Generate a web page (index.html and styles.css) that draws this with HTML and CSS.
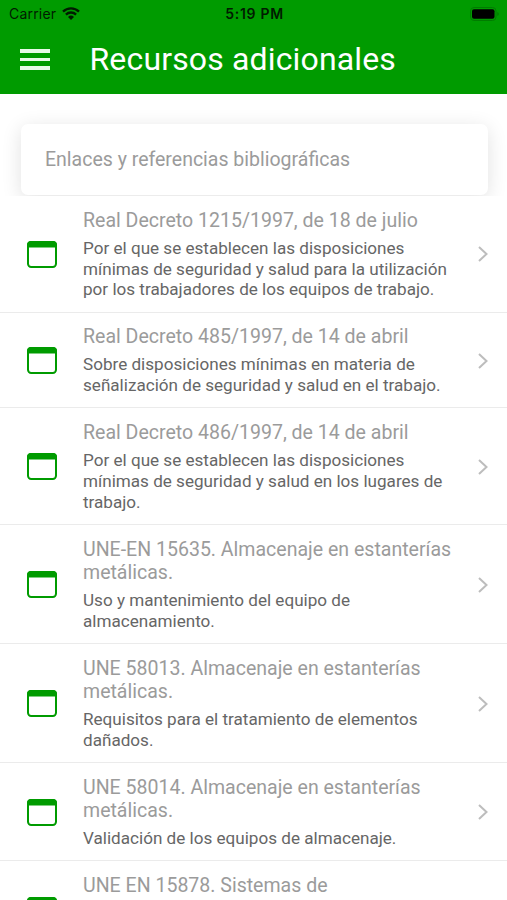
FILE: index.html
```html
<!DOCTYPE html>
<html lang="es">
<head>
    <meta charset="UTF-8">
    <meta name="viewport" content="width=device-width, initial-scale=1.0">
    <title>Recursos adicionales</title>
    <link rel="stylesheet" href="styles.css">
</head>
<body>
    <svg class="sprite" width="0" height="0">
        <symbol id="web" viewBox="0 0 30 27">
            <rect x="1" y="1" width="28" height="25" rx="3.2" fill="none" stroke="#009b00" stroke-width="2"/>
            <path d="M0 6.5V4a4 4 0 0 1 4-4h22a4 4 0 0 1 4 4v2.5z" fill="#009b00"/>
        </symbol>
        <symbol id="chevron" viewBox="0 0 10 16">
            <path d="M1 1l7.5 7L1 15" fill="none" stroke="#bdbdbd" stroke-width="2"/>
        </symbol>
    </svg>

    <header class="header">
        <div class="status">
            <div class="status-left">
                <span class="carrier">Carrier</span>
                <svg class="wifi" width="18" height="13" viewBox="0 0 18 13">
                    <path d="M1 4.6a11.4 11.4 0 0 1 16 0M3.9 7.6a7.3 7.3 0 0 1 10.2 0" fill="none" stroke="#001c00" stroke-width="2.3"/>
                    <path d="M9 13L6 10a4.3 4.3 0 0 1 6 0z" fill="#001c00"/>
                </svg>
            </div>
            <span class="time">5:19 PM</span>
            <div class="status-right">
                <svg width="30" height="14" viewBox="0 0 30 14">
                    <rect x=".5" y=".5" width="25.5" height="13" rx="3.5" fill="none" stroke="#007c00"/>
                    <rect x="2" y="2.3" width="22.5" height="9.4" rx="2" fill="#000"/>
                    <path d="M27.3 5v4q1.5-.6 1.5-2t-1.5-2z" fill="#007c00"/>
                </svg>
            </div>
        </div>
        <div class="toolbar">
            <div class="menu">
                <span class="bar"></span>
                <span class="bar"></span>
                <span class="bar"></span>
            </div>
            <h1 class="title">Recursos adicionales</h1>
        </div>
    </header>

    <div class="card-wrap">
        <div class="card">Enlaces y referencias bibliográficas</div>
    </div>

    <div class="list">
        <div class="item">
            <svg class="icon"><use href="#web"/></svg>
            <div class="content">
                <h2>Real Decreto 1215/1997, de 18 de julio</h2>
                <p>Por el que se establecen las disposiciones<br>mínimas de seguridad y salud para la utilización<br>por los trabajadores de los equipos de trabajo.</p>
            </div>
            <svg class="chevron"><use href="#chevron"/></svg>
        </div>
        <div class="item">
            <svg class="icon"><use href="#web"/></svg>
            <div class="content">
                <h2>Real Decreto 485/1997, de 14 de abril</h2>
                <p>Sobre disposiciones mínimas en materia de<br>señalización de seguridad y salud en el trabajo.</p>
            </div>
            <svg class="chevron"><use href="#chevron"/></svg>
        </div>
        <div class="item">
            <svg class="icon"><use href="#web"/></svg>
            <div class="content">
                <h2>Real Decreto 486/1997, de 14 de abril</h2>
                <p>Por el que se establecen las disposiciones<br>mínimas de seguridad y salud en los lugares de<br>trabajo.</p>
            </div>
            <svg class="chevron"><use href="#chevron"/></svg>
        </div>
        <div class="item">
            <svg class="icon"><use href="#web"/></svg>
            <div class="content">
                <h2>UNE-EN 15635. Almacenaje en estanterías<br>metálicas.</h2>
                <p>Uso y mantenimiento del equipo de<br>almacenamiento.</p>
            </div>
            <svg class="chevron"><use href="#chevron"/></svg>
        </div>
        <div class="item">
            <svg class="icon"><use href="#web"/></svg>
            <div class="content">
                <h2>UNE 58013. Almacenaje en estanterías<br>metálicas.</h2>
                <p>Requisitos para el tratamiento de elementos<br>dañados.</p>
            </div>
            <svg class="chevron"><use href="#chevron"/></svg>
        </div>
        <div class="item">
            <svg class="icon"><use href="#web"/></svg>
            <div class="content">
                <h2>UNE 58014. Almacenaje en estanterías<br>metálicas.</h2>
                <p>Validación de los equipos de almacenaje.</p>
            </div>
            <svg class="chevron"><use href="#chevron"/></svg>
        </div>
        <div class="item last">
            <svg class="icon"><use href="#web"/></svg>
            <div class="content">
                <h2>UNE EN 15878. Sistemas de</h2>
            </div>
        </div>
    </div>
</body>
</html>
```

FILE: styles.css
```css
* {
    box-sizing: border-box;
}

body {
    margin: 0;
    height: 900px;
    overflow: hidden;
    background: #fff;
    font-family: Roboto, "Liberation Sans", sans-serif;
}

.sprite {
    display: block;
}

.header {
    height: 93.5px;
    background: #009b00;
}

.status {
    display: grid;
    grid-template-columns: 1fr auto 1fr;
    align-items: center;
    height: 27px;
    padding: 0 7px 0 9px;
    font-family: Inter, sans-serif;
    color: #001c00;
}

.status-left {
    display: flex;
    align-items: center;
    gap: 6px;
}

.status-right {
    display: flex;
    justify-content: flex-end;
}

.carrier {
    font-size: 14px;
    letter-spacing: 0.2px;
}

.time {
    font-size: 14px;
    font-weight: 600;
    letter-spacing: 0.7px;
}

.toolbar {
    display: flex;
    align-items: center;
    gap: 39.5px;
    height: 65px;
    padding-left: 20px;
}

.menu {
    display: flex;
    flex-direction: column;
    gap: 5px;
    width: 30px;
}

.bar {
    height: 3.5px;
    background: #e8fbe8;
}

.title {
    margin: -2px 0 0;
    font-size: 32px;
    font-weight: 400;
    letter-spacing: 0.15px;
    color: #fff;
}

.card-wrap {
    height: 102.5px;
    padding: 30px 19px 0 21px;
    overflow: hidden;
}

.card {
    display: flex;
    align-items: center;
    height: 71px;
    padding-left: 24px;
    border-radius: 7px;
    background: #fff;
    box-shadow: 0 4px 20px rgba(0, 0, 0, 0.12);
    font-size: 19.5px;
    color: #9b9b9b;
}

.item {
    display: flex;
    align-items: center;
    padding: 12.6px 19px 11.3px 27px;
    border-bottom: 1.2px solid #ebebeb;
}

.icon {
    flex: none;
    width: 30px;
    height: 27px;
    margin-right: 26px;
}

.content {
    flex: 1;
    white-space: nowrap;
}

.content h2 {
    margin: 0 0 6px;
    font-size: 19.55px;
    line-height: 23.3px;
    font-weight: 400;
    color: #9b9b9b;
}

.content p {
    margin: 0;
    font-size: 17.1px;
    line-height: 20.8px;
    color: #666;
}

.chevron {
    flex: none;
    width: 10px;
    height: 16px;
}

.last {
    align-items: flex-start;
}

.last .icon {
    margin-top: 23px;
}
```
